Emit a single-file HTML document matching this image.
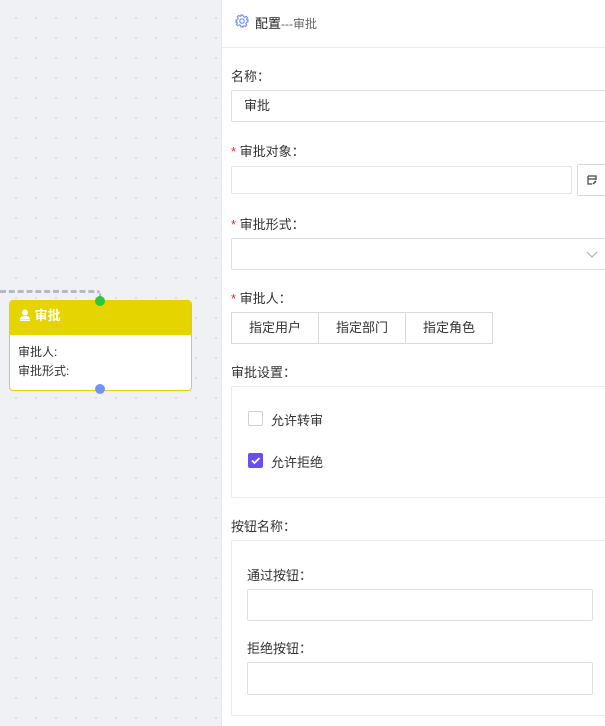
<!DOCTYPE html>
<html><head><meta charset="utf-8"><style>
*{box-sizing:border-box;margin:0;padding:0}
body{width:605px;height:726px;overflow:hidden;position:relative;font-family:"Liberation Sans","Noto Sans CJK SC",sans-serif;font-size:13px;color:#333;background:#fff}
.canvas{position:absolute;left:0;top:0;width:221px;height:726px;background-color:#f0f1f5;background-image:radial-gradient(circle,#d0d2d8 0.7px,transparent 1px);background-size:20px 20px;background-position:6px 8px}
.panel{position:absolute;left:221px;top:0;width:384px;height:726px;background:#fff;border-left:1px solid #e8e8e8}
.a{position:absolute}
.inp{position:absolute;border:1px solid #dcdfe6;border-radius:2px;background:#fff}
.lbl{position:absolute;font-size:13px;color:#333}
.req:before{content:"* ";color:#f5222d}
.btn{position:absolute;top:312px;height:32px;width:88px;border:1px solid #d9d9d9;text-align:center;line-height:30px;font-size:13px;background:#fff}
.cb{position:absolute;width:15px;height:15px;border:1px solid #d0d0d0;border-radius:2px;background:#fff}
</style></head><body>
<div class="canvas"></div>
<div class="a" style="left:0;top:290px;width:101px;height:8px;border-top:3px dashed #b8b9bf;border-right:2px dashed #b8b9bf;border-top-right-radius:4px"></div>
<div class="a" style="left:9px;top:300px;width:183px;height:91px;border:1px solid #e8cf00;border-radius:4px;background:#fff;overflow:hidden">
 <div style="height:34px;background:#e6d400;color:#fff;font-weight:bold;font-size:13px;line-height:30px;padding-left:9px">
  <svg width="12" height="12" viewBox="0 0 12 12" style="vertical-align:-1px"><circle cx="6" cy="3.5" r="3" fill="#fff"/><path d="M1 10 Q1 7 6 7 Q11 7 11 10Z" fill="#fff"/><rect x="1" y="10.5" width="10" height="1.5" fill="#fff"/></svg> 审批</div>
 <div style="padding:8px 8px;line-height:19px;font-size:12px;color:#333">审批人:<br>审批形式:</div>
</div>
<div class="a" style="left:95px;top:296px;width:10px;height:10px;border-radius:50%;background:#2bc63b"></div>
<div class="a" style="left:95px;top:384px;width:10px;height:10px;border-radius:50%;background:#6e95f5"></div>

<div class="panel"></div>
<div class="a" style="left:221px;top:47px;width:384px;height:1px;background:#ebebeb"></div>
<svg class="a" style="left:235px;top:14px" width="14" height="14" viewBox="0 0 14 14"><circle cx="7" cy="7" r="2.2" fill="none" stroke="#6e8ef0" stroke-width="1.2"/><path d="M6 1h2l.4 1.6 1.4.6 1.4-.9 1.4 1.4-.9 1.4.6 1.4L13 6v2l-1.6.4-.6 1.4.9 1.4-1.4 1.4-1.4-.9-1.4.6L8 13H6l-.4-1.6-1.4-.6-1.4.9-1.4-1.4.9-1.4-.6-1.4L1 8V6l1.6-.4.6-1.4-.9-1.4 1.4-1.4 1.4.9 1.4-.6Z" fill="none" stroke="#6e8ef0" stroke-width="1.1"/></svg>
<div class="lbl" style="left:255px;top:13px;color:#222">配置<span style="color:#666;font-size:12px">---审批</span></div>

<div class="lbl" style="left:231px;top:66px">名称：</div>
<div class="inp" style="left:231px;top:90px;width:380px;height:32px;padding-left:12px;line-height:30px">审批</div>
<div class="lbl req" style="left:231px;top:141px">审批对象：</div>
<div class="inp" style="left:231px;top:166px;width:341px;height:28px;border-color:#e4e4e4"></div>
<div class="inp" style="left:577px;top:164px;width:40px;height:32px;border-color:#d9d9d9"></div>
<svg class="a" style="left:586px;top:174px" width="12" height="12" viewBox="0 0 12 12"><path d="M2 2h8v4M2 2v8h4M2 5h8" fill="none" stroke="#444" stroke-width="1.2"/><path d="M7 10l3-3" stroke="#444" stroke-width="1.5"/></svg>
<div class="lbl req" style="left:231px;top:214px">审批形式：</div>
<div class="inp" style="left:231px;top:238px;width:380px;height:32px"></div>
<svg class="a" style="left:586px;top:249px" width="12" height="10" viewBox="0 0 12 10"><path d="M1 3l5 5 5-5" fill="none" stroke="#b0b0b0" stroke-width="1.2"/></svg>
<div class="lbl req" style="left:231px;top:288px">审批人：</div>
<div class="btn" style="left:231px">指定用户</div>
<div class="btn" style="left:318px">指定部门</div>
<div class="btn" style="left:405px">指定角色</div>
<div class="lbl" style="left:231px;top:362px">审批设置：</div>
<div class="inp" style="left:231px;top:386px;width:380px;height:112px;border-color:#ebebeb"></div>
<div class="cb" style="left:248px;top:411px"></div>
<div class="lbl" style="left:271px;top:410px">允许转审</div>
<div class="cb" style="left:248px;top:453px;background:#6a4cf0;border-color:#6a4cf0"><svg width="13" height="13" viewBox="0 0 13 13" style="display:block"><path d="M3 6.5l2.5 2.5 5-5" fill="none" stroke="#fff" stroke-width="1.8"/></svg></div>
<div class="lbl" style="left:271px;top:452px">允许拒绝</div>
<div class="lbl" style="left:231px;top:516px">按钮名称：</div>
<div class="inp" style="left:231px;top:540px;width:380px;height:176px;border-color:#ebebeb"></div>
<div class="lbl" style="left:247px;top:565px">通过按钮：</div>
<div class="inp" style="left:247px;top:589px;width:346px;height:32px"></div>
<div class="lbl" style="left:247px;top:638px">拒绝按钮：</div>
<div class="inp" style="left:247px;top:662px;width:346px;height:33px"></div>
</body></html>
